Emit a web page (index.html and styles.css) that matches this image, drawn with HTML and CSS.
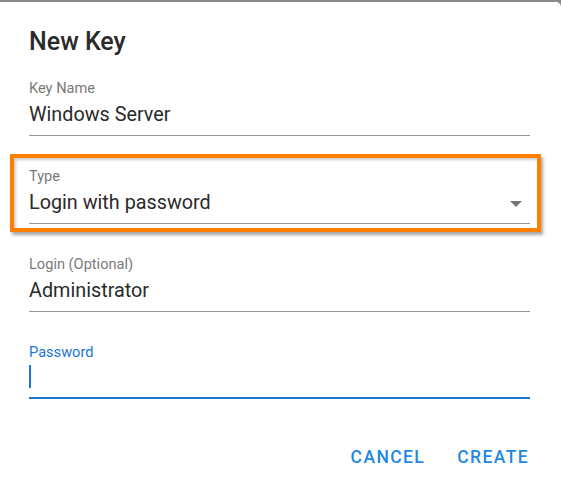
FILE: index.html
```html
<!DOCTYPE html>
<html>
<head>
<meta charset="utf-8">
<link rel="stylesheet" href="styles.css">
</head>
<body>
<div class="dialog">
  <h2 class="title">New Key</h2>
  <div class="field">
    <label class="label">Key Name</label>
    <div class="value">Windows Server</div>
  </div>
  <div class="field select">
    <label class="label">Type</label>
    <div class="value">Login with password<span class="arrow"></span></div>
  </div>
  <div class="field">
    <label class="label">Login (Optional)</label>
    <div class="value">Administrator</div>
  </div>
  <div class="field focused">
    <label class="label">Password</label>
    <div class="value"><span class="caret"></span></div>
  </div>
  <div class="actions">
    <button class="btn">Cancel</button>
    <button class="btn">Create</button>
  </div>
  <div class="highlight"></div>
</div>
</body>
</html>
```
FILE: styles.css
```css
html, body {
  margin: 0;
  padding: 0;
}
body {
  background: #8a8a8a;
  font-family: Roboto, "Liberation Sans", sans-serif;
  width: 561px;
  height: 488px;
  overflow: hidden;
}
.dialog {
  position: relative;
  margin-top: 2px;
  height: 486px;
  background: #fff;
  border-top-right-radius: 5px;
  padding: 0 31px 0 29px;
  box-sizing: border-box;
  display: flex;
  flex-direction: column;
}
.title {
  margin: 25px 0 23px;
  font-size: 25px;
  line-height: 30px;
  font-weight: 500;
  color: #2a2a2a;
}
.field {
  display: flex;
  flex-direction: column;
  border-bottom: 1px solid #949494;
  margin-bottom: 32px;
}
.label {
  font-size: 14.6px;
  line-height: 17px;
  color: #7a7a7a;
}
.value {
  position: relative;
  margin-top: 6px;
  font-size: 19.8px;
  line-height: 23px;
  height: 23px;
  padding-bottom: 9px;
  color: #2a2a2a;
}
.arrow {
  position: absolute;
  right: 8px;
  top: 10px;
  width: 0;
  height: 0;
  border-left: 6px solid transparent;
  border-right: 6px solid transparent;
  border-top: 6px solid #757575;
}
.focused {
  border-bottom: 2px solid #1976d2;
}
.focused .label {
  color: #1976d2;
}
.focused .value {
  padding-bottom: 7px;
}
.caret {
  display: block;
  width: 2px;
  height: 23px;
  margin-top: -2px;
  background: #1976d2;
}
.actions {
  display: flex;
  justify-content: flex-end;
  gap: 32px;
  margin-top: 16px;
  margin-right: 1px;
}
.btn {
  border: 0;
  background: none;
  padding: 0;
  font-family: Roboto, "Liberation Sans", sans-serif;
  font-size: 17.5px;
  line-height: 20px;
  font-weight: 500;
  letter-spacing: 1.4px;
  text-transform: uppercase;
  color: #2288e3;
}
.highlight {
  position: absolute;
  left: 10px;
  top: 152px;
  width: 531px;
  height: 78px;
  box-sizing: border-box;
  border: 4px solid #ff8000;
  box-shadow: 2px 3px 3px rgba(0,0,0,0.35), inset 2px 2px 3px rgba(0,0,0,0.2);
}
```
